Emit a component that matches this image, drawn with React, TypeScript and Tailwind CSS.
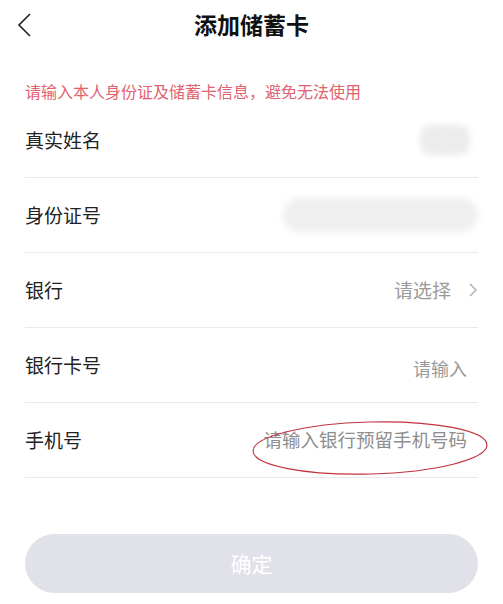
import React from 'react';

const font = { fontFamily: '"Noto Sans CJK SC", "Noto Sans", sans-serif' };

function Row({ label, children }: { label: string; children?: React.ReactNode }) {
  return (
    <div className="relative flex h-[75px] items-center justify-between border-b border-[#e9e9e9]">
      <span className="text-[19px] text-[#222]">{label}</span>
      {children}
    </div>
  );
}

export default function App() {
  return (
    <div className="w-[503px] h-[604px] bg-white overflow-hidden" style={font}>
      {/* Header */}
      <div className="relative flex h-[48px] items-center justify-center">
        <svg className="absolute left-[16px] top-[12px]" width="18" height="26" viewBox="0 0 18 26">
          <path d="M14 2 L3 13 L14 24" fill="none" stroke="#222" strokeWidth="1.6" />
        </svg>
        <h1 className="text-[23px] font-bold text-[#111]">添加储蓄卡</h1>
      </div>

      <div className="px-[25px]">
        <p className="pt-[31px] text-[16px] leading-[24px] text-[#e2626f]">
          请输入本人身份证及储蓄卡信息，避免无法使用
        </p>

        <Row label="真实姓名">
          <div className="mr-[8px] h-[30px] w-[50px] rounded-[10px] bg-[#ececec] blur-[3px]" />
        </Row>
        <Row label="身份证号">
          <div className="h-[34px] w-[195px] rounded-full bg-[#efefef] blur-[3px]" />
        </Row>
        <Row label="银行">
          <div className="flex items-center gap-[18px] text-[19px] text-[#9a9a9a]">
            <span>请选择</span>
            <svg width="8" height="14" viewBox="0 0 8 14" className="mr-[1px]">
              <path d="M1 1 L7 7 L1 13" fill="none" stroke="#aaa" strokeWidth="1.3" />
            </svg>
          </div>
        </Row>
        <Row label="银行卡号">
          <span className="mr-[11px] mt-[6px] text-[18px] text-[#9a9a9a]">请输入</span>
        </Row>
        <Row label="手机号">
          <span className="mr-[11px] text-[18.5px] text-[#8e8e8e]">请输入银行预留手机号码</span>
          <svg className="pointer-events-none absolute left-[212px] top-[16px]" width="266" height="58" viewBox="0 0 266 58">
            <ellipse cx="133" cy="29" rx="117" ry="26" fill="none" stroke="#c2333f" strokeWidth="1.2" transform="rotate(-1.5 133 29)" />
          </svg>
        </Row>

        <button className="mt-[56px] flex h-[59px] w-full items-center justify-center rounded-full bg-[#e1e1e9] text-[21px] text-white">
          确定
        </button>
      </div>
    </div>
  );
}
